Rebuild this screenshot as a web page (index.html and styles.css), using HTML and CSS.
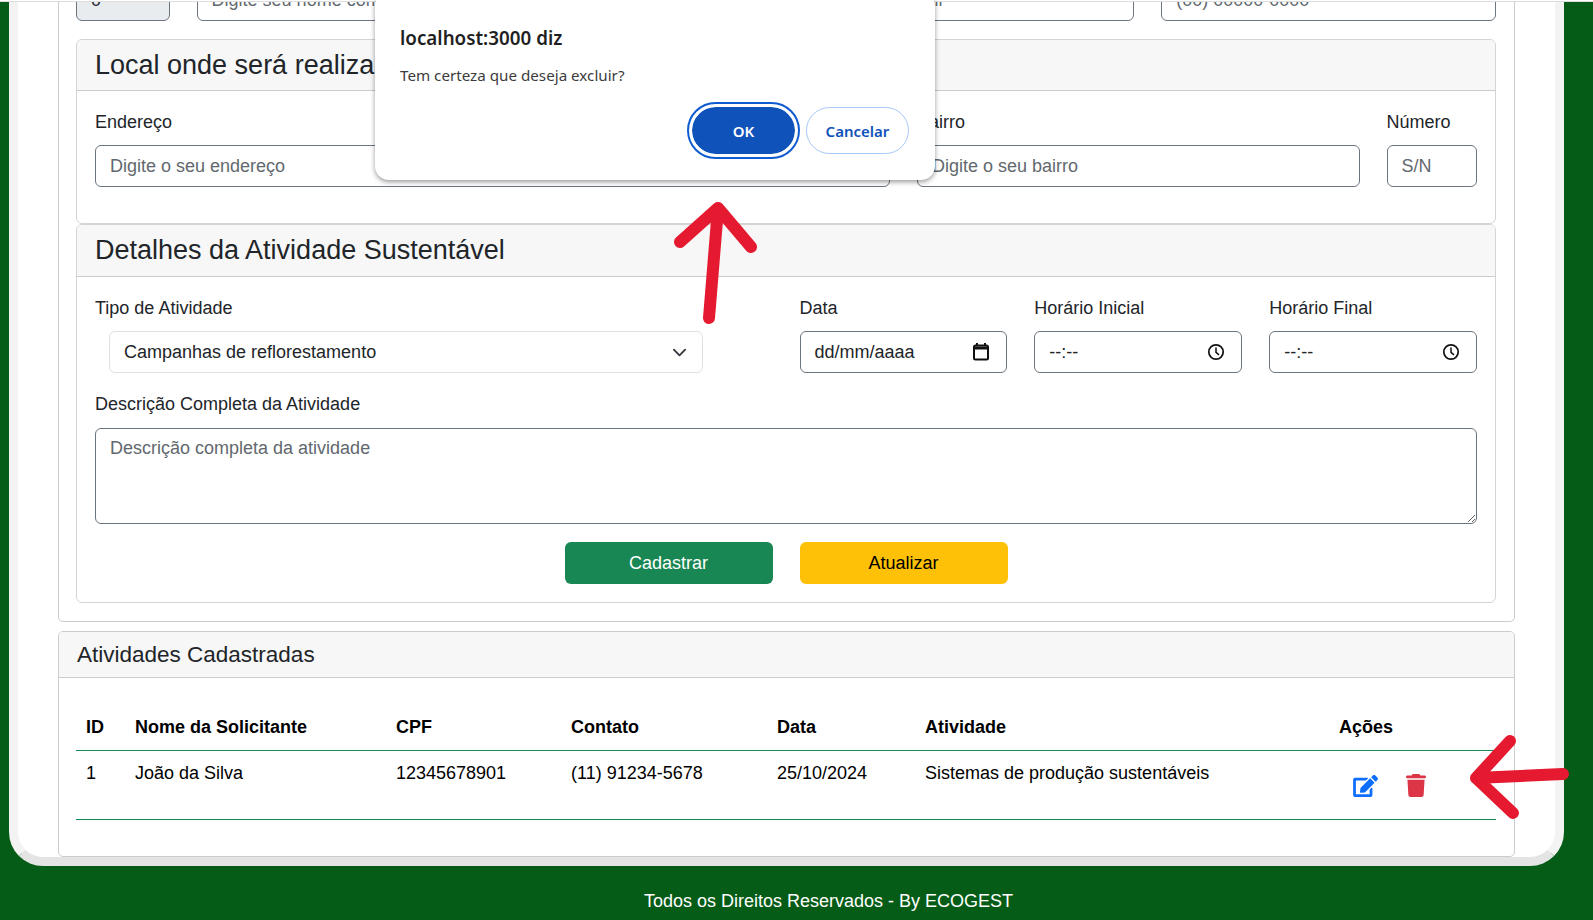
FILE: index.html
```html
<!DOCTYPE html>
<html lang="pt-BR">
<head>
    <meta charset="UTF-8">
    <meta name="viewport" content="width=device-width, initial-scale=1.0">
    <title>Atividades Sustentáveis</title>
    <link rel="stylesheet" href="styles.css">
</head>
<body>
    <div class="top-line"></div>
    <main class="panel">
        <form class="form-card">
            <div class="row top-row">
                <div class="col-1"><input class="control disabled" type="text" value="0" disabled></div>
                <div class="col-5"><input class="control" type="text" placeholder="Digite seu nome completo"></div>
                <div class="col-3"><input class="control" type="text" placeholder="Digite seu email"></div>
                <div class="col-3"><input class="control" type="text" placeholder="(00) 00000-0000"></div>
            </div>

            <section class="card">
                <h4 class="card-header">Local onde será realizada a Atividade</h4>
                <div class="card-body local-body">
                    <div class="row">
                        <div class="col-7">
                            <label class="field-label">Endereço</label>
                            <input class="control" type="text" placeholder="Digite o seu endereço">
                        </div>
                        <div class="col-4">
                            <label class="field-label">Bairro</label>
                            <input class="control" type="text" placeholder="Digite o seu bairro">
                        </div>
                        <div class="col-1">
                            <label class="field-label">Número</label>
                            <input class="control" type="text" placeholder="S/N">
                        </div>
                    </div>
                </div>
            </section>

            <section class="card">
                <h4 class="card-header details-header">Detalhes da Atividade Sustentável</h4>
                <div class="card-body">
                    <div class="row">
                        <div class="col-6">
                            <label class="field-label">Tipo de Atividade</label>
                            <select class="type-select">
                                <option>Campanhas de reflorestamento</option>
                            </select>
                        </div>
                        <div class="col-2">
                            <label class="field-label">Data</label>
                            <div class="control picker">
                                <span>dd/mm/aaaa</span>
                                <svg class="picker-date" width="16" height="18" viewBox="0 0 16 18"><path d="M4 0v3M12 0v3" stroke="#111" stroke-width="2"/><rect x="1" y="2.5" width="14" height="14" rx="1.5" fill="none" stroke="#111" stroke-width="2"/><path d="M1 5h14" stroke="#111" stroke-width="3"/></svg>
                            </div>
                        </div>
                        <div class="col-2">
                            <label class="field-label">Horário Inicial</label>
                            <div class="control picker">
                                <span class="time-text">--:--</span>
                                <svg width="18" height="18" viewBox="0 0 18 18"><circle cx="9" cy="9" r="7.2" fill="none" stroke="#111" stroke-width="1.7"/><path d="M9 4.6V9.3l3 2.6" fill="none" stroke="#111" stroke-width="1.5"/></svg>
                            </div>
                        </div>
                        <div class="col-2">
                            <label class="field-label">Horário Final</label>
                            <div class="control picker">
                                <span class="time-text">--:--</span>
                                <svg width="18" height="18" viewBox="0 0 18 18"><circle cx="9" cy="9" r="7.2" fill="none" stroke="#111" stroke-width="1.7"/><path d="M9 4.6V9.3l3 2.6" fill="none" stroke="#111" stroke-width="1.5"/></svg>
                            </div>
                        </div>
                    </div>
                    <label class="field-label desc-label">Descrição Completa da Atividade</label>
                    <textarea class="control desc-area" placeholder="Descrição completa da atividade"></textarea>
                    <div class="button-row">
                        <button class="btn btn-success" type="button">Cadastrar</button>
                        <button class="btn btn-warning" type="button">Atualizar</button>
                    </div>
                </div>
            </section>
        </form>

        <section class="list-card">
            <h5 class="list-header">Atividades Cadastradas</h5>
            <div class="list-body">
                <table class="activity-table">
                    <thead>
                        <tr>
                            <th class="c-id">ID</th>
                            <th class="c-name">Nome da Solicitante</th>
                            <th class="c-cpf">CPF</th>
                            <th class="c-contact">Contato</th>
                            <th class="c-date">Data</th>
                            <th class="c-activity">Atividade</th>
                            <th class="c-actions">Ações</th>
                        </tr>
                    </thead>
                    <tbody>
                        <tr>
                            <td>1</td>
                            <td>João da Silva</td>
                            <td>12345678901</td>
                            <td>(11) 91234-5678</td>
                            <td>25/10/2024</td>
                            <td>Sistemas de produção sustentáveis</td>
                            <td>
                                <div class="actions">
                                    <svg class="icon-edit" width="25" height="22" viewBox="0 0 576 512"><path d="M402.6 83.2l90.2 90.2c3.8 3.8 3.8 10 0 13.8L274.4 405.6l-92.8 10.3c-12.4 1.4-22.9-9.1-21.5-21.5l10.3-92.8L388.8 83.2c3.8-3.8 10-3.8 13.8 0zm162-22.9l-48.8-48.8c-15.2-15.2-39.9-15.2-55.2 0l-35.4 35.4c-3.8 3.8-3.8 10 0 13.8l90.2 90.2c3.8 3.8 10 3.8 13.8 0l35.4-35.4c15.2-15.3 15.2-40 0-55.2zM384 346.2V448H64V128h229.8c3.2 0 6.2-1.3 8.5-3.5l40-40c7.6-7.6 2.2-20.5-8.5-20.5H48C21.5 64 0 85.5 0 112v352c0 26.5 21.5 48 48 48h352c26.5 0 48-21.5 48-48V306.2c0-10.7-12.9-16-20.5-8.5l-40 40c-2.2 2.3-3.5 5.3-3.5 8.5z"/></svg>
                                    <svg class="icon-trash" width="20" height="23" viewBox="0 0 448 512"><path d="M135.2 17.7L128 32H32C14.3 32 0 46.3 0 64S14.3 96 32 96H416c17.7 0 32-14.3 32-32s-14.3-32-32-32H320l-7.2-14.3C307.4 6.8 296.3 0 284.2 0H163.8c-12.1 0-23.2 6.8-28.6 17.7zM416 128H32L53.2 467c1.6 25.3 22.6 45 47.9 45H346.9c25.3 0 46.3-19.7 47.9-45L416 128z"/></svg>
                                </div>
                            </td>
                        </tr>
                    </tbody>
                </table>
            </div>
        </section>
    </main>
    <footer class="site-footer">Todos os Direitos Reservados - By ECOGEST</footer>

    <!-- browser confirm dialog -->
    <div class="confirm-box">
        <div class="confirm-title">localhost:3000 diz</div>
        <div class="confirm-text">Tem certeza que deseja excluir?</div>
        <div class="confirm-buttons">
            <button class="confirm-ok" type="button">OK</button>
            <button class="confirm-cancel" type="button">Cancelar</button>
        </div>
    </div>

    <!-- red arrows drawn over the screenshot -->
    <svg class="arrows" width="1593" height="920" viewBox="0 0 1593 920">
        <g fill="none" stroke="#e5192f" stroke-width="12" stroke-linecap="round" stroke-linejoin="round">
            <path d="M709 318L718 208M680 242L718 208L751 247"/>
            <path d="M1563 774L1476 778M1510 741L1476 778L1513 813"/>
        </g>
    </svg>
</body>
</html>
```

FILE: styles.css
```css
* {
    box-sizing: border-box;
}
body {
    position: relative;
    margin: 0;
    height: 920px;
    overflow: hidden;
    font-family: "Liberation Sans", Arial, sans-serif;
    font-size: 18px;
    line-height: 25px;
    color: #212529;
    background-color: #055c16;
}
.top-line {
    height: 2px;
    background-color: #fff;
    border-bottom: 1px solid #ddd;
}

/* white sheet with thick grey edge */
.panel {
    height: 864px;
    margin: 0 29px 0 9px;
    padding: 0 39px 0 40px;
    overflow: hidden;
    background-color: #fff;
    border: 9px solid #f3f3f3;
    border-top: 0;
    border-bottom-color: #e4e4e4;
    border-radius: 0 0 34px 34px;
}
.form-card {
    height: 647px;
    margin: -27px 0 9px 0;
    width: 1457px;
    padding: 3px 18px 0 17px;
    background-color: #fff;
    border: 1px solid #ccc;
    border-radius: 5px;
}
.row {
    display: grid;
    grid-template-columns: repeat(12, 1fr);
    column-gap: 27px;
}
.col-1 { grid-column: span 1; }
.col-2 { grid-column: span 2; }
.col-3 { grid-column: span 3; }
.col-4 { grid-column: span 4; }
.col-5 { grid-column: span 5; }
.col-6 { grid-column: span 6; }
.col-7 { grid-column: span 7; }
.top-row {
    margin-bottom: 18px;
}
.card {
    background-color: #fff;
    border: 1px solid #d4d4d4;
    border-radius: 6px;
    overflow: hidden;
}
.card-header {
    height: 51px;
    margin: 0;
    padding: 0 18px;
    font-size: 27px;
    font-weight: 400;
    line-height: 50px;
    background-color: #f7f7f7;
    border-bottom: 1px solid #ccc;
}
.details-header {
    height: 52px;
}
.card-body {
    padding: 19px 18px 18px;
}
.local-body {
    height: 132px;
}
.field-label {
    display: block;
    margin-bottom: 10px;
}
.control {
    display: block;
    width: 100%;
    height: 42px;
    padding: 0 14px;
    font-family: inherit;
    font-size: 18px;
    color: #212529;
    background-color: #fff;
    border: 1px solid #6c757d;
    border-radius: 6px;
}
.control::placeholder {
    color: #62686e;
    opacity: 1;
}
.disabled {
    background-color: #e9ecef;
}
.type-select {
    display: block;
    width: 594px;
    height: 42px;
    margin-left: 14px;
    padding: 0 14px;
    font-family: inherit;
    font-size: 18px;
    color: #212529;
    background: #fff url("data:image/svg+xml,%3csvg xmlns='http://www.w3.org/2000/svg' viewBox='0 0 16 16'%3e%3cpath fill='none' stroke='%23343a40' stroke-linecap='round' stroke-linejoin='round' stroke-width='2' d='m2 5 6 6 6-6'/%3e%3c/svg%3e") no-repeat right 15px center / 15px 15px;
    border: 1px solid #dee2e6;
    border-radius: 6px;
    appearance: none;
}
.picker {
    display: flex;
    align-items: center;
    justify-content: space-between;
    padding-right: 16px;
}
.picker-date {
    margin-right: 1px;
}
.time-text {
    font-size: 18px;
}
.desc-label {
    margin-top: 19px;
    margin-bottom: 11px;
}
.desc-area {
    height: 96px;
    padding-top: 9px;
}
.button-row {
    display: flex;
    justify-content: center;
    gap: 27px;
    margin-top: 18px;
}
.btn {
    width: 208px;
    height: 42px;
    font-family: inherit;
    font-size: 18px;
    border: 0;
    border-radius: 6px;
}
.btn-success {
    color: #fff;
    background-color: #198754;
}
.btn-warning {
    color: #000;
    background-color: #ffc107;
}

/* table card */
.list-card {
    width: 1457px;
    height: 226px;
    background-color: #fff;
    border: 1px solid #ccc;
    border-radius: 5px;
    overflow: hidden;
}
.list-header {
    height: 46px;
    margin: 0;
    padding: 0 18px;
    font-size: 22.5px;
    font-weight: 400;
    line-height: 45px;
    background-color: #f7f7f7;
    border-bottom: 1px solid #ccc;
}
.list-body {
    padding: 0 17px;
}
.activity-table {
    width: 1420px;
    margin-top: 27px;
    border-collapse: collapse;
    table-layout: fixed;
    color: #000;
}
.activity-table th,
.activity-table td {
    padding: 10px;
    text-align: left;
    vertical-align: top;
    border-bottom: 1px solid #198754;
}
.activity-table th {
    height: 45px;
    font-weight: 700;
}
.activity-table td {
    height: 69px;
}
.c-id { width: 49px; }
.c-name { width: 261px; }
.c-cpf { width: 175px; }
.c-contact { width: 206px; }
.c-date { width: 148px; }
.c-activity { width: 414px; }
.c-actions { width: 167px; }
.actions {
    display: flex;
    align-items: center;
    gap: 28px;
    padding: 13px 0 0 14px;
}
.icon-edit { fill: #0d6efd; }
.icon-trash { fill: #dc3545; }

.site-footer {
    padding: 24px 0 0 64px;
    font-size: 18px;
    line-height: 22px;
    text-align: center;
    color: #fff;
}

/* chrome alert box */
.confirm-box {
    position: absolute;
    top: -8px;
    left: 375px;
    width: 560px;
    height: 188px;
    padding: 33px 26px 0 25px;
    font-family: "Noto Sans", "Open Sans", sans-serif;
    background-color: #fff;
    border-radius: 14px;
    box-shadow: 0 2px 5px rgba(0, 0, 0, 0.4);
}
.confirm-title {
    font-size: 18.8px;
    font-weight: 600;
    line-height: 26px;
    color: #1f1f1f;
}
.confirm-text {
    margin-top: 13px;
    font-size: 15.2px;
    line-height: 22px;
    color: #3c3c3c;
}
.confirm-buttons {
    display: flex;
    align-items: center;
    justify-content: flex-end;
    gap: 8px;
    margin-top: 18px;
}
.confirm-ok,
.confirm-cancel {
    font-family: inherit;
    font-size: 15px;
    font-weight: 600;
    border-radius: 30px;
}
.confirm-ok {
    width: 109px;
    height: 53px;
    margin-left: 2px;
    color: #fff;
    background-color: #0f52ba;
    background-clip: padding-box;
    border: 3px solid #fff;
    outline: 2px solid #0f5bd0;
}
.confirm-cancel {
    width: 103px;
    height: 47px;
    color: #0f52ba;
    background-color: #fff;
    border: 1px solid #a8c7fa;
}
.arrows {
    position: absolute;
    top: 0;
    left: 0;
    pointer-events: none;
}
```
